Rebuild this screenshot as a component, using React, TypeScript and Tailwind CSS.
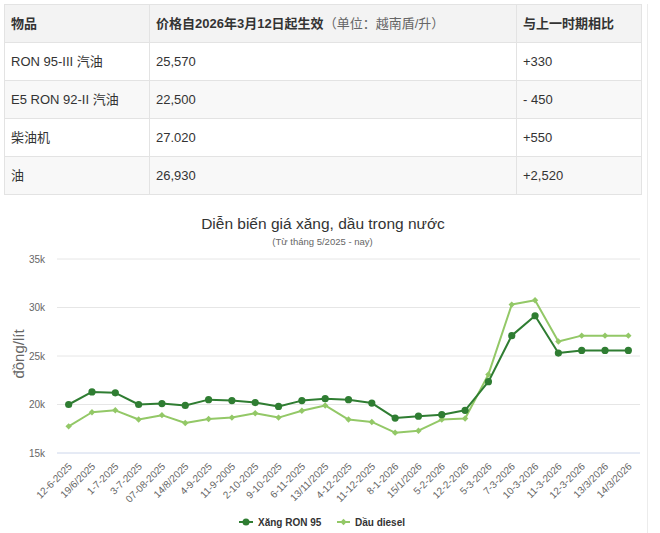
import React from 'react';

const ROWS = [
  { name: 'RON 95-III 汽油', price: '25,570', diff: '+330' },
  { name: 'E5 RON 92-II 汽油', price: '22,500', diff: '- 450' },
  { name: '柴油机', price: '27.020', diff: '+550' },
  { name: '油', price: '26,930', diff: '+2,520' },
];

const LABELS = [
  '12-6-2025', '19/6/2025', '1-7-2025', '3-7-2025', '07-08-2025', '14/8/2025',
  '4-9-2025', '11-9-2005', '2-10-2025', '9-10-2025', '6-11-2025', '13/11/2025',
  '4-12-2025', '11-12-2025', '8-1-2026', '15/1/2026', '5-2-2026', '12-2-2026',
  '5-3-2026', '7-3-2026', '10-3-2026', '11-3-2026', '12-3-2026', '13/3/2026', '14/3/2026',
];

const RON95 = [
  20.0, 21.3, 21.2, 20.0, 20.1, 19.9, 20.5, 20.4, 20.2, 19.8, 20.4, 20.6, 20.5,
  20.15, 18.6, 18.8, 18.95, 19.4, 22.35, 27.1, 29.15, 25.3, 25.57, 25.57, 25.57,
];

const DIESEL = [
  17.75, 19.2, 19.4, 18.45, 18.9, 18.1, 18.5, 18.65, 19.1, 18.65, 19.35, 19.9, 18.45,
  18.2, 17.1, 17.3, 18.45, 18.55, 23.1, 30.3, 30.75, 26.5, 27.1, 27.1, 27.1,
];

const DARK = '#2f7d32';
const LIGHT = '#93c867';

const PLOT_LEFT = 57;
const PLOT_RIGHT = 640;
const STEP = (PLOT_RIGHT - PLOT_LEFT) / LABELS.length;

const px = (i: number) => PLOT_LEFT + STEP * (i + 0.5);
const py = (v: number) => 452 - (v - 15) * 9.7;

function PriceTable() {
  const cell = 'border border-[#e3e3e3] px-[6px] h-[38px] align-middle';
  return (
    <table className="ml-[4px] mt-[4px] w-[637px] border-collapse text-[13px] text-[#333] table-fixed">
      <colgroup>
        <col className="w-[145px]" />
        <col className="w-[367px]" />
        <col className="w-[125px]" />
      </colgroup>
      <thead>
        <tr className="bg-[#f3f3f3]">
          <th className={`${cell} text-left font-bold`}>物品</th>
          <th className={`${cell} text-left font-bold`}>
            价格自2026年3月12日起生效<span className="font-normal text-[#666]">（单位：越南盾/升）</span>
          </th>
          <th className={`${cell} text-left font-bold`}>与上一时期相比</th>
        </tr>
      </thead>
      <tbody>
        {ROWS.map((r, i) => (
          <tr key={r.name} className={i % 2 === 1 ? 'bg-[#f8f8f8]' : 'bg-white'}>
            <td className={cell}>{r.name}</td>
            <td className={cell}>{r.price}</td>
            <td className={cell}>{r.diff}</td>
          </tr>
        ))}
      </tbody>
    </table>
  );
}

function Diamond({ x, y, r, color }: { x: number; y: number; r: number; color: string }) {
  return <polygon points={`${x},${y - r} ${x + r},${y} ${x},${y + r} ${x - r},${y}`} fill={color} />;
}

function PriceChart() {
  const darkPts = RON95.map((v, i) => `${px(i)},${py(v)}`).join(' ');
  const lightPts = DIESEL.map((v, i) => `${px(i)},${py(v)}`).join(' ');

  return (
    <svg width={648} height={339} viewBox="0 194 648 339" className="block">
      <text x={323} y={228} textAnchor="middle" fontSize={15.5} fill="#333">
        Diễn biến giá xăng, dầu trong nước
      </text>
      <text x={322.5} y={244} textAnchor="middle" fontSize={9.5} fill="#666">
        (Từ tháng 5/2025 - nay)
      </text>

      {[35, 30, 25, 20].map((v) => (
        <line key={v} x1={PLOT_LEFT} x2={PLOT_RIGHT} y1={py(v)} y2={py(v)} stroke="#e6e6e6" strokeWidth={1} />
      ))}
      <line x1={PLOT_LEFT} x2={PLOT_RIGHT} y1={452} y2={452} stroke="#ccd6eb" strokeWidth={1} />

      {[35, 30, 25, 20, 15].map((v) => (
        <text key={v} x={45} y={py(v) + 3.5} textAnchor="end" fontSize={10} fill="#666">
          {v}k
        </text>
      ))}

      <text
        x={0}
        y={0}
        transform="translate(24 353) rotate(-90)"
        textAnchor="middle"
        fontSize={15}
        fill="#666"
      >
        đồng/lít
      </text>

      {LABELS.map((l, i) => (
        <text
          key={l + i}
          x={0}
          y={0}
          transform={`translate(${px(i) + 4} 466) rotate(-45)`}
          textAnchor="end"
          fontSize={10}
          fill="#666"
        >
          {l}
        </text>
      ))}

      <polyline points={lightPts} fill="none" stroke={LIGHT} strokeWidth={2} strokeLinejoin="round" />
      {DIESEL.map((v, i) => (
        <Diamond key={i} x={px(i)} y={py(v)} r={3.2} color={LIGHT} />
      ))}

      <polyline points={darkPts} fill="none" stroke={DARK} strokeWidth={2} strokeLinejoin="round" />
      {RON95.map((v, i) => (
        <circle key={i} cx={px(i)} cy={py(v)} r={3.6} fill={DARK} />
      ))}

      <line x1={239} x2={253} y1={521} y2={521} stroke={DARK} strokeWidth={2} />
      <circle cx={246} cy={521} r={3.5} fill={DARK} />
      <text x={258} y={524.5} fontSize={10} fontWeight="bold" fill="#333">
        Xăng RON 95
      </text>

      <line x1={337} x2={350} y1={521} y2={521} stroke={LIGHT} strokeWidth={2} />
      <Diamond x={343.5} y={521} r={3.2} color={LIGHT} />
      <text x={355} y={524.5} fontSize={10} fontWeight="bold" fill="#333">
        Dầu diesel
      </text>
    </svg>
  );
}

export default function App() {
  return (
    <div className="w-[660px] h-[533px] overflow-hidden bg-white font-['Liberation_Sans','Noto_Sans_CJK_SC',sans-serif]">
      <div className="w-[648px] h-[533px] border-r border-[#ececec]">
        <PriceTable />
        <PriceChart />
      </div>
    </div>
  );
}
